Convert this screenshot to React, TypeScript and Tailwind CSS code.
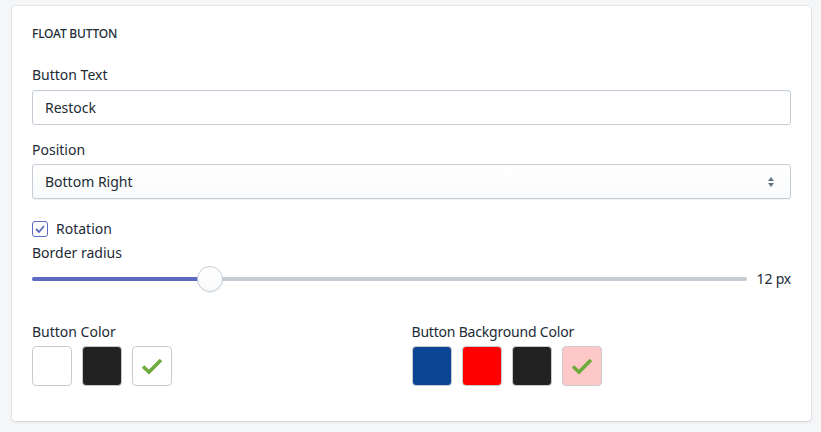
import { useState } from "react";

const buttonColors = [
    { hex: "#ffffff" },
    { hex: "#222222" },
    { hex: "#ffffff", selected: true },
];

const backgroundColors = [
    { hex: "#0b4594" },
    { hex: "#ff0000" },
    { hex: "#222222" },
    { hex: "#ffc8c8", selected: true },
];

function Check() {
    return (
        <svg width="22" height="18" viewBox="0 0 22 18">
            <path d="M2 9.5 L8 15 L20 3" fill="none" stroke="#6eab3d" strokeWidth="3.6" />
        </svg>
    );
}

function Swatch({ hex, selected }: { hex: string; selected?: boolean }) {
    return (
        <div
            className="w-10 h-10 rounded-[4px] border border-[#c9cccf] flex items-center justify-center cursor-pointer"
            style={{ backgroundColor: hex }}
        >
            {selected && <Check />}
        </div>
    );
}

export default function App() {
    const [texto, setTexto] = useState("Restock");
    const [raio] = useState(12);
    const pct = raio / 50;

    return (
        <div className="min-h-[432px] bg-[#f4f6f8] pt-[6px] pl-3 pr-[10px] font-['Noto_Sans',sans-serif] text-[14px] text-[#212b36]">
            <div className="bg-white rounded-[4px] shadow-[0_0_0_1px_rgba(63,63,68,0.05),0_1px_3px_0_rgba(63,63,68,0.15)] px-5 pt-5 pb-[35px]">
                <h2 className="text-[12px] leading-4 font-medium tracking-[-0.2px]">FLOAT BUTTON</h2>

                <label className="block mt-[23px] leading-5">Button Text</label>
                <input
                    value={texto}
                    onChange={(e) => setTexto(e.target.value)}
                    className="mt-[5px] w-full h-[35px] px-3 border border-[#c4cdd5] rounded-[3px] outline-none shadow-[inset_0_1px_0_0_rgba(99,115,129,0.05)]"
                />

                <label className="block mt-[15px] leading-5">Position</label>
                <div className="mt-[4px] h-[35px] px-3 border border-[#c4cdd5] rounded-[3px] bg-gradient-to-b from-white to-[#f9fafb] shadow-[0_1px_0_0_rgba(22,29,37,0.05)] flex items-center justify-between">
                    <span>Bottom Right</span>
                    <svg width="8" height="12" viewBox="0 0 8 12" className="mr-[3px]">
                        <path d="M4 1 L7 5 L1 5 Z M4 11 L7 7 L1 7 Z" fill="#637381" />
                    </svg>
                </div>

                <div className="mt-5 flex items-center gap-2 leading-5">
                    <span className="w-4 h-4 rounded-[3px] border-[1.5px] border-[#5c6ac4] flex items-center justify-center">
                        <svg width="10" height="8" viewBox="0 0 10 8">
                            <path d="M1 4 L4 7 L9 1" fill="none" stroke="#5c6ac4" strokeWidth="1.8" />
                        </svg>
                    </span>
                    <span>Rotation</span>
                </div>

                <label className="block mt-1 leading-5">Border radius</label>
                <div className="mt-[3px] flex items-center gap-[10px] h-[26px]">
                    <div className="relative flex-1 h-[26px] flex items-center">
                        <div className="w-full h-1 rounded-full bg-[#c4cdd5]" />
                        <div
                            className="absolute left-0 h-1 rounded-l-full bg-[#5c6ac4]"
                            style={{ width: `calc(${pct} * (100% - 26px) + 13px)` }}
                        />
                        <div
                            className="absolute top-0 w-[26px] h-[26px] rounded-full border border-[#c4cdd5] bg-gradient-to-b from-white to-[#f9fafb] shadow-[0_1px_0_0_rgba(22,29,37,0.05)]"
                            style={{ left: `calc(${pct} * (100% - 26px))` }}
                        />
                    </div>
                    <span className="leading-5 tracking-[-0.2px]">{raio} px</span>
                </div>

                <div className="mt-[30px] grid grid-cols-2">
                    <div>
                        <div className="leading-5">Button Color</div>
                        <div className="mt-1 flex gap-[10px]">
                            {buttonColors.map((c, i) => (
                                <Swatch key={i} hex={c.hex} selected={c.selected} />
                            ))}
                        </div>
                    </div>
                    <div>
                        <div className="leading-5 tracking-[-0.2px]">Button Background Color</div>
                        <div className="mt-1 flex gap-[10px]">
                            {backgroundColors.map((c, i) => (
                                <Swatch key={i} hex={c.hex} selected={c.selected} />
                            ))}
                        </div>
                    </div>
                </div>
            </div>
        </div>
    );
}
